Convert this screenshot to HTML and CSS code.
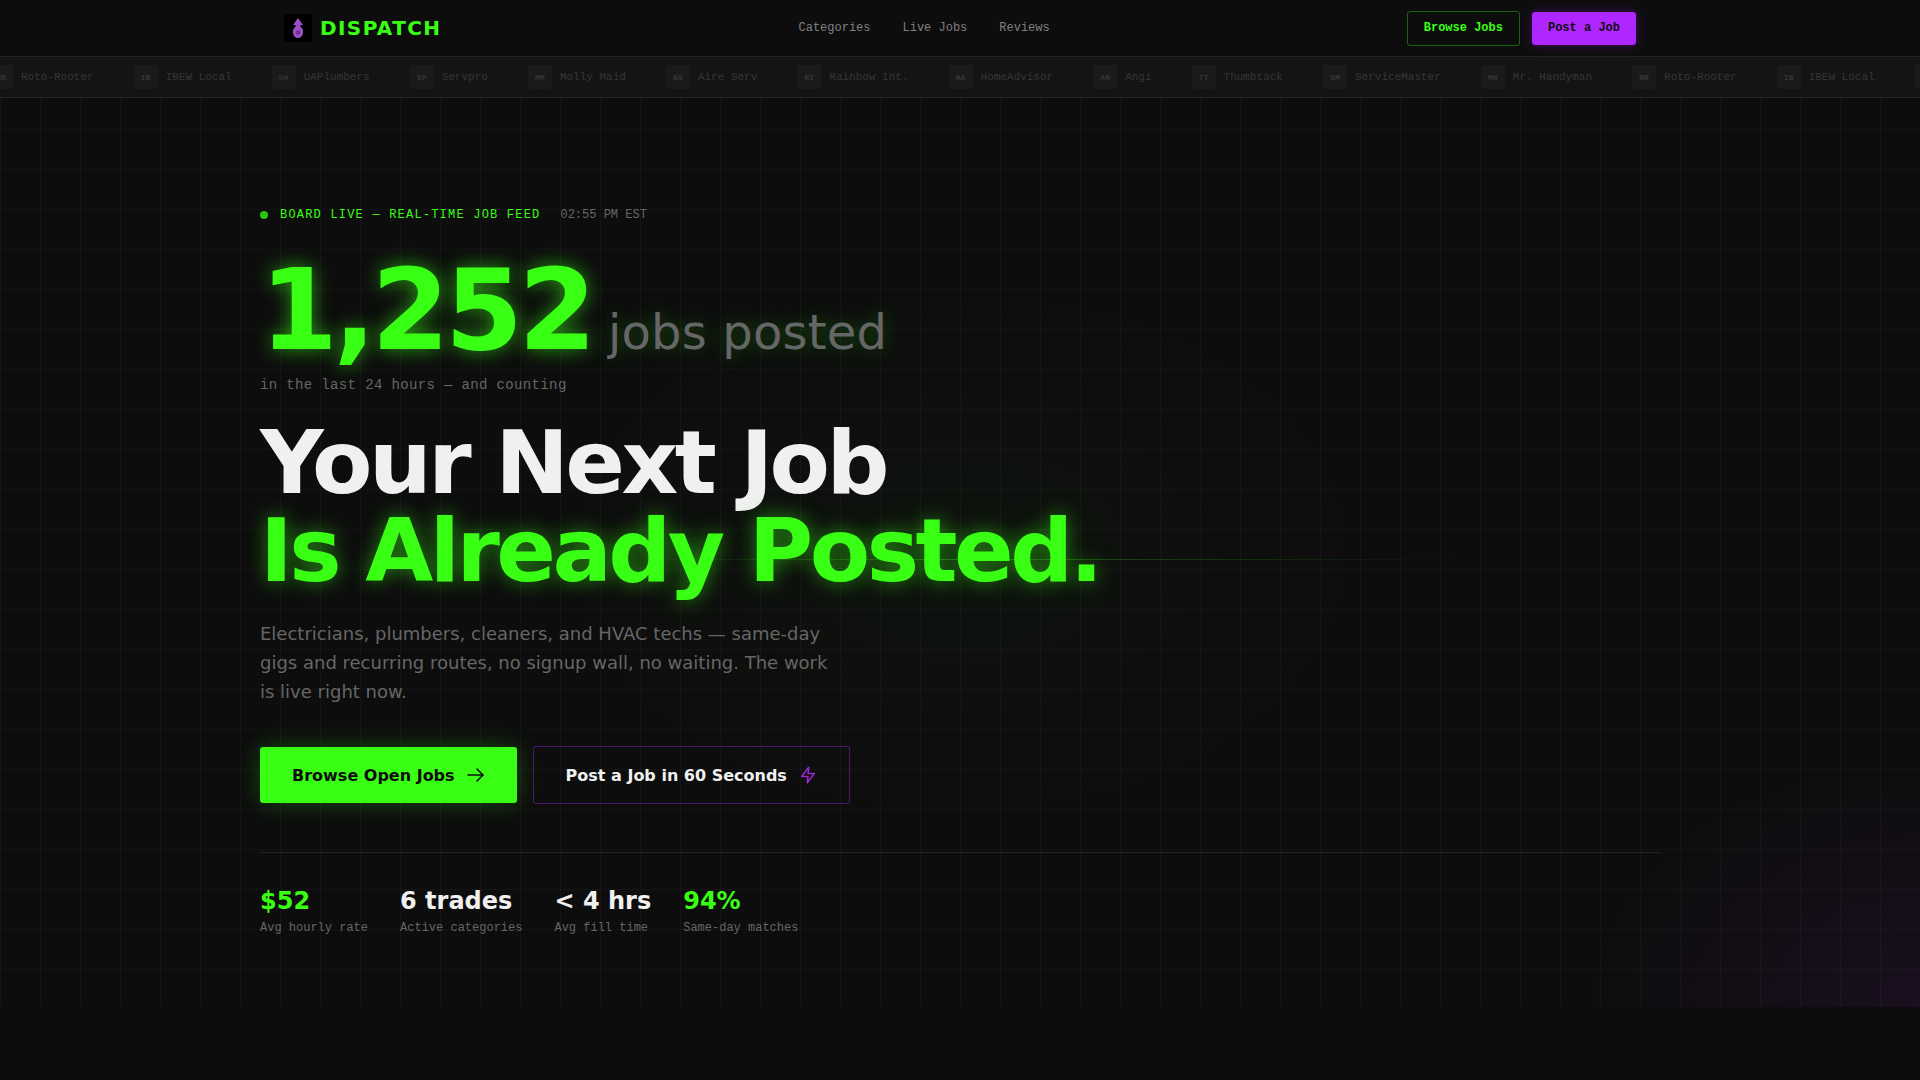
FILE: index.html
```html
<!DOCTYPE html>
<html lang="en">
<head>
    <meta charset="UTF-8">
    <meta name="viewport" content="width=device-width, initial-scale=1.0">
    <title>Dispatch - Live Job Board</title>
    <link rel="stylesheet" href="styles.css">
</head>
<body>
    <header class="nav">
        <div class="nav-inner">
            <a class="logo" href="#">
                <span class="logo-mark">
                    <svg width="14" height="22" viewBox="0 0 14 22">
                        <path d="M7 1 L12 8 H9.500 V10 C11.500 11 12.500 13 12 16 C11.500 19.500 9.500 21 7 21 C4.500 21 2.500 19.500 2 16 C1.500 13 2.500 11 4.500 10 V8 H2 Z" fill="#9b4fc4"/>
                        <circle cx="7" cy="15.500" r="2.200" fill="#6a3388"/>
                    </svg>
                </span>
                <span class="logo-text">DISPATCH</span>
            </a>
            <nav class="nav-links">
                <a href="#">Categories</a>
                <a href="#">Live Jobs</a>
                <a href="#">Reviews</a>
            </nav>
            <div class="nav-actions">
                <a class="btn-small btn-outline" href="#">Browse Jobs</a>
                <a class="btn-small btn-purple" href="#">Post a Job</a>
            </div>
        </div>
    </header>

    <div class="ticker">
        <div class="ticker-track">
            <div class="ticker-item"><span class="ticker-badge">RR</span>Roto-Rooter</div>
            <div class="ticker-item"><span class="ticker-badge">IB</span>IBEW Local</div>
            <div class="ticker-item"><span class="ticker-badge">UA</span>UAPlumbers</div>
            <div class="ticker-item"><span class="ticker-badge">SP</span>Servpro</div>
            <div class="ticker-item"><span class="ticker-badge">MM</span>Molly Maid</div>
            <div class="ticker-item"><span class="ticker-badge">AS</span>Aire Serv</div>
            <div class="ticker-item"><span class="ticker-badge">RI</span>Rainbow Int.</div>
            <div class="ticker-item"><span class="ticker-badge">HA</span>HomeAdvisor</div>
            <div class="ticker-item"><span class="ticker-badge">AN</span>Angi</div>
            <div class="ticker-item"><span class="ticker-badge">TT</span>Thumbtack</div>
            <div class="ticker-item"><span class="ticker-badge">SM</span>ServiceMaster</div>
            <div class="ticker-item"><span class="ticker-badge">MH</span>Mr. Handyman</div>
            <div class="ticker-item"><span class="ticker-badge">RR</span>Roto-Rooter</div>
            <div class="ticker-item"><span class="ticker-badge">IB</span>IBEW Local</div>
            <div class="ticker-item"><span class="ticker-badge">UA</span>UAPlumbers</div>
        </div>
    </div>

    <main class="hero">
        <div class="hero-grid"></div>
        <div class="hero-glow"></div>
        <div class="hero-line"></div>
        <div class="hero-inner">
            <div class="status">
                <span class="status-dot"></span>
                <span class="status-label">BOARD LIVE — REAL-TIME JOB FEED</span>
                <span class="status-time">02:55 PM EST</span>
            </div>

            <div class="count-row">
                <span class="count">1,252</span>
                <span class="count-unit">jobs posted</span>
            </div>
            <p class="count-note">in the last 24 hours — and counting</p>

            <h1 class="headline">Your Next Job<br><span class="headline-green">Is Already Posted.</span></h1>

            <p class="lead">Electricians, plumbers, cleaners, and HVAC techs — same-day gigs and recurring routes, no signup wall, no waiting. The work is live right now.</p>

            <div class="cta-row">
                <a class="cta cta-green" href="#">
                    Browse Open Jobs
                    <svg width="18" height="18" viewBox="0 0 18 18" fill="none" stroke="currentColor" stroke-width="1.500" stroke-linecap="round" stroke-linejoin="round"><path d="M1 9H16"/><path d="M10 3l6 6-6 6"/></svg>
                </a>
                <a class="cta cta-dark" href="#">
                    Post a Job in 60 Seconds
                    <svg class="bolt" width="18" height="18" viewBox="0 0 24 24" fill="none" stroke="currentColor" stroke-width="2" stroke-linecap="round" stroke-linejoin="round"><path d="M13 1.500 3.500 14h8.500l-1 8.500L20.500 10H12l1-8.500z"/></svg>
                </a>
            </div>

            <div class="stats">
                <div class="stat">
                    <div class="stat-value green">$52</div>
                    <div class="stat-label">Avg hourly rate</div>
                </div>
                <div class="stat">
                    <div class="stat-value">6 trades</div>
                    <div class="stat-label">Active categories</div>
                </div>
                <div class="stat">
                    <div class="stat-value">&lt; 4 hrs</div>
                    <div class="stat-label">Avg fill time</div>
                </div>
                <div class="stat">
                    <div class="stat-value green">94%</div>
                    <div class="stat-label">Same-day matches</div>
                </div>
            </div>
        </div>
    </main>
</body>
</html>
```

FILE: styles.css
```css
* {
    box-sizing: border-box;
}

body {
    margin: 0;
    min-height: 100vh;
    background: #0d0d0d;
    color: #f0f0f0;
    font-family: "DejaVu Sans", sans-serif;
    overflow: hidden;
}

a {
    color: inherit;
    text-decoration: none;
}

/* nav */
.nav {
    height: 57px;
    border-bottom: 1px solid #242424;
}

.nav-inner {
    max-width: 1400px;
    height: 56px;
    margin: 0 auto;
    padding: 0 24px;
    display: flex;
    align-items: center;
    justify-content: space-between;
}

.logo {
    display: flex;
    align-items: center;
    gap: 8px;
}

.logo-mark {
    width: 28px;
    height: 28px;
    background: #000;
    display: flex;
    align-items: center;
    justify-content: center;
}

.logo-text {
    font-size: 20px;
    font-weight: 700;
    letter-spacing: 1.400px;
    color: #39ff14;
}

.nav-links {
    display: flex;
    gap: 32px;
    font-family: "Liberation Mono", monospace;
    font-size: 12px;
    color: #808080;
}

.nav-actions {
    display: flex;
    align-items: center;
    gap: 12px;
}

.btn-small {
    font-family: "Liberation Mono", monospace;
    font-size: 12px;
    font-weight: 700;
    padding: 0 16px;
    border-radius: 3px;
    display: flex;
    align-items: center;
}

.btn-outline {
    height: 35px;
    color: #39ff14;
    border: 1px solid rgba(57, 255, 20, 0.35);
}

.btn-purple {
    height: 33px;
    color: #0d0d0d;
    background: #b026ff;
    box-shadow: 0 0 12px rgba(176, 38, 255, 0.3);
}

/* ticker */
.ticker {
    height: 41px;
    background: #141414;
    border-bottom: 1px solid #242424;
    overflow: hidden;
    display: flex;
    align-items: center;
}

.ticker-track {
    display: flex;
    gap: 40px;
    margin-left: -11px;
    white-space: nowrap;
}

.ticker-item {
    display: flex;
    align-items: center;
    gap: 8px;
    font-family: "Liberation Mono", monospace;
    font-size: 11px;
    color: #363636;
}

.ticker-badge {
    width: 24px;
    height: 24px;
    border-radius: 2px;
    background: #1a1a1a;
    color: #363636;
    font-size: 8px;
    font-weight: 700;
    display: flex;
    align-items: center;
    justify-content: center;
}

/* hero */
.hero {
    position: relative;
    height: 909px;
    overflow: hidden;
}

.hero-grid {
    position: absolute;
    inset: 0;
    background-image:
        linear-gradient(rgba(255, 255, 255, 0.028) 1px, transparent 1px),
        linear-gradient(90deg, rgba(255, 255, 255, 0.028) 1px, transparent 1px);
    background-size: 40px 40px;
    background-position: 0 -9px;
}

.hero-glow {
    position: absolute;
    inset: 0;
    background:
        radial-gradient(ellipse 600px 400px at 50% 50%, rgba(57, 255, 20, 0.025), transparent 70%),
        radial-gradient(ellipse 480px 360px at 100% 100%, rgba(176, 38, 255, 0.08), transparent 70%);
}

.hero-line {
    position: absolute;
    left: 0;
    right: 0;
    top: 461px;
    height: 1px;
    background: linear-gradient(90deg, transparent 33%, rgba(57, 255, 20, 0.3) 50%, transparent 76%);
}

.hero-inner {
    position: relative;
    max-width: 1400px;
    margin: 0 auto;
    padding-top: 110px;
}

.status {
    display: flex;
    align-items: center;
    font-family: "Liberation Mono", monospace;
    font-size: 12px;
    letter-spacing: 1.200px;
    margin-bottom: 32px;
}

.status-dot {
    width: 8px;
    height: 8px;
    border-radius: 50%;
    background: #2bc411;
    margin-right: 12px;
}

.status-label {
    color: #39ff14;
}

.status-time {
    margin-left: 20px;
    color: #666;
    letter-spacing: 0;
}

.count-row {
    display: flex;
    align-items: baseline;
    gap: 16px;
}

.count {
    font-size: 112px;
    font-weight: 700;
    line-height: 1;
    letter-spacing: -0.04em;
    color: #39ff14;
    text-shadow: 0 0 20px rgba(57, 255, 20, 0.6);
}

.count-unit {
    font-size: 48px;
    letter-spacing: 0.2px;
    color: #666;
    text-shadow: 0 0 20px rgba(57, 255, 20, 0.3);
}

.count-note {
    margin: 11px 0 0;
    font-family: "Liberation Mono", monospace;
    font-size: 14px;
    letter-spacing: 0.360px;
    color: #666;
}

.headline {
    margin: 26px 0 25px;
    font-size: 88px;
    font-weight: 700;
    line-height: 88px;
    letter-spacing: -0.04em;
    color: #f0f0f0;
}

.headline-green {
    color: #39ff14;
    text-shadow: 0 0 20px rgba(57, 255, 20, 0.5);
}

.lead {
    max-width: 580px;
    margin: 0 0 40px;
    font-size: 18px;
    line-height: 1.6;
    color: #666;
}

.cta-row {
    display: flex;
    align-items: center;
    gap: 16px;
    margin-bottom: 48px;
}

.cta {
    padding: 0 32px;
    border-radius: 3px;
    display: flex;
    align-items: center;
    gap: 12px;
    font-size: 16px;
    font-weight: 700;
}

.cta-green {
    height: 56px;
    background: #39ff14;
    color: #0d0d0d;
    box-shadow: 0 0 24px rgba(57, 255, 20, 0.25);
}

.cta-dark {
    height: 58px;
    border: 1px solid rgba(176, 38, 255, 0.4);
    color: #f0f0f0;
}

.bolt {
    color: #9a28cc;
}

.stats {
    display: flex;
    gap: 32px;
    padding-top: 32px;
    border-top: 1px solid #242424;
}

.stat-value {
    font-size: 24px;
    font-weight: 700;
    line-height: 32px;
}

.green {
    color: #39ff14;
}

.stat-label {
    margin-top: 4px;
    font-family: "Liberation Mono", monospace;
    font-size: 12px;
    color: #666;
}
```
